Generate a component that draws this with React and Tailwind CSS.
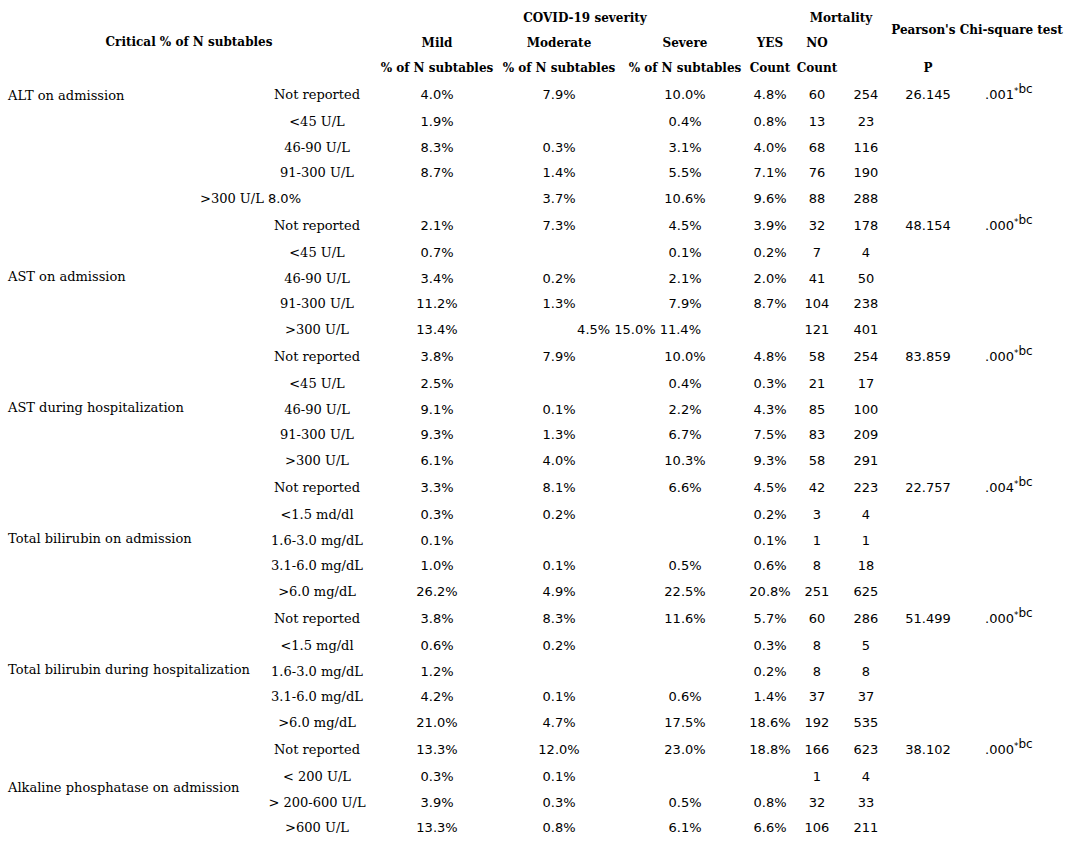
import React from "react";

const cols =
  "grid grid-cols-[256px_122px_118px_126px_126px_44px_50px_48px_76px_98px]";

const serif = { fontFamily: '"DejaVu Serif", serif' };

const groups = [
  {
    label: "ALT on admission",
    top: true,
    stat: "26.145",
    p: ".001",
    rows: [
      ["Not reported", "4.0%", "7.9%", "10.0%", "4.8%", "60", "254"],
      ["<45 U/L", "1.9%", "", "0.4%", "0.8%", "13", "23"],
      ["46-90 U/L", "8.3%", "0.3%", "3.1%", "4.0%", "68", "116"],
      ["91-300 U/L", "8.7%", "1.4%", "5.5%", "7.1%", "76", "190"],
      { odd: "alt", cells: ["3.7%", "10.6%", "9.6%", "88", "288"] },
    ],
  },
  {
    label: "AST on admission",
    stat: "48.154",
    p: ".000",
    rows: [
      ["Not reported", "2.1%", "7.3%", "4.5%", "3.9%", "32", "178"],
      ["<45 U/L", "0.7%", "", "0.1%", "0.2%", "7", "4"],
      ["46-90 U/L", "3.4%", "0.2%", "2.1%", "2.0%", "41", "50"],
      ["91-300 U/L", "11.2%", "1.3%", "7.9%", "8.7%", "104", "238"],
      { odd: "ast", cells: ["13.4%", "121", "401"] },
    ],
  },
  {
    label: "AST during hospitalization",
    stat: "83.859",
    p: ".000",
    rows: [
      ["Not reported", "3.8%", "7.9%", "10.0%", "4.8%", "58", "254"],
      ["<45 U/L", "2.5%", "", "0.4%", "0.3%", "21", "17"],
      ["46-90 U/L", "9.1%", "0.1%", "2.2%", "4.3%", "85", "100"],
      ["91-300 U/L", "9.3%", "1.3%", "6.7%", "7.5%", "83", "209"],
      [">300 U/L", "6.1%", "4.0%", "10.3%", "9.3%", "58", "291"],
    ],
  },
  {
    label: "Total bilirubin on admission",
    stat: "22.757",
    p: ".004",
    rows: [
      ["Not reported", "3.3%", "8.1%", "6.6%", "4.5%", "42", "223"],
      ["<1.5 md/dl", "0.3%", "0.2%", "", "0.2%", "3", "4"],
      ["1.6-3.0 mg/dL", "0.1%", "", "", "0.1%", "1", "1"],
      ["3.1-6.0 mg/dL", "1.0%", "0.1%", "0.5%", "0.6%", "8", "18"],
      [">6.0 mg/dL", "26.2%", "4.9%", "22.5%", "20.8%", "251", "625"],
    ],
  },
  {
    label: "Total bilirubin during hospitalization",
    stat: "51.499",
    p: ".000",
    rows: [
      ["Not reported", "3.8%", "8.3%", "11.6%", "5.7%", "60", "286"],
      ["<1.5 mg/dl", "0.6%", "0.2%", "", "0.3%", "8", "5"],
      ["1.6-3.0 mg/dL", "1.2%", "", "", "0.2%", "8", "8"],
      ["3.1-6.0 mg/dL", "4.2%", "0.1%", "0.6%", "1.4%", "37", "37"],
      [">6.0 mg/dL", "21.0%", "4.7%", "17.5%", "18.6%", "192", "535"],
    ],
  },
  {
    label: "Alkaline phosphatase on admission",
    stat: "38.102",
    p: ".000",
    rows: [
      ["Not reported", "13.3%", "12.0%", "23.0%", "18.8%", "166", "623"],
      ["< 200 U/L", "0.3%", "0.1%", "", "", "1", "4"],
      ["> 200-600 U/L", "3.9%", "0.3%", "0.5%", "0.8%", "32", "33"],
      [">600 U/L", "13.3%", "0.8%", "6.1%", "6.6%", "106", "211"],
    ],
  },
];

const Num = ({ children, className = "" }) => (
  <div
    className={`flex items-center justify-center font-['DejaVu_Sans',sans-serif] text-[13px] ${className}`}
  >
    {children}
  </div>
);

const Sub = ({ children }) => (
  <div className="flex items-center justify-center whitespace-pre text-[13px]" style={serif}>
    {children}
  </div>
);

const Sig = ({ p }) => (
  <div className="flex items-center pl-[19px] font-['DejaVu_Sans',sans-serif] text-[13px]">
    <span>{p}</span>
    <span className="relative top-[-3px] text-[9px]">*</span>
    <span className="relative top-[-6px] text-[12px]">bc</span>
  </div>
);

const Row = ({ row, first, group }) => {
  if (row.odd === "alt") {
    // misaligned row: label and mild value run together
    const [m, s, y, n, t] = row.cells;
    return (
      <>
        <div
          className="col-span-2 flex items-center pl-[200px] whitespace-pre text-[13px]"
          style={serif}
        >
          {">300 U/L "}
          <span className="font-['DejaVu_Sans',sans-serif]">8.0%</span>
        </div>
        <div />
        <Num>{m}</Num>
        <Num>{s}</Num>
        <Num>{y}</Num>
        <Num>{n}</Num>
        <Num>{t}</Num>
        <div />
        <div />
      </>
    );
  }
  if (row.odd === "ast") {
    const [mild, n, t] = row.cells;
    return (
      <>
        <Sub>{">300 U/L"}</Sub>
        <Num>{mild}</Num>
        <Num className="col-span-2 justify-end pr-[47px] whitespace-pre">
          4.5% 15.0% 11.4%
        </Num>
        <div />
        <Num>{n}</Num>
        <Num>{t}</Num>
        <div />
        <div />
      </>
    );
  }
  const [sub, mild, mod, sev, yes, no, tot] = row;
  return (
    <>
      <Sub>{sub}</Sub>
      <Num>{mild}</Num>
      <Num>{mod}</Num>
      <Num>{sev}</Num>
      <Num>{yes}</Num>
      <Num>{no}</Num>
      <Num>{tot}</Num>
      {first ? <Num>{group.stat}</Num> : <div />}
      {first ? <Sig p={group.p} /> : <div />}
    </>
  );
};

const Group = ({ group }) => {
  const five = group.rows.length === 5;
  const rowsClass = five
    ? "grid-rows-[29px_repeat(4,25.5px)]"
    : "grid-rows-[29px_repeat(3,25.5px)]";
  let labelClass = "items-center row-span-4";
  if (group.top) labelClass = "items-start pt-[6px] row-span-4";
  else if (five) labelClass = "items-center row-span-5";
  return (
    <div className={`${cols} ${rowsClass}`}>
      <div
        className={`${labelClass} flex pl-2 text-[13px] whitespace-nowrap`}
        style={serif}
      >
        {group.label}
      </div>
      {group.rows.map((row, i) => (
        <Row key={i} row={row} first={i === 0} group={group} />
      ))}
    </div>
  );
};

const Header = () => (
  <div
    className={`${cols} grid-rows-[25px_25px_25px] mt-[5px] font-bold text-[12px] whitespace-nowrap`}
    style={serif}
  >
    <div className="row-span-3 col-span-2 flex items-center justify-center pb-[1px]">
      Critical % of N subtables
    </div>
    <div className="col-span-4 flex items-center justify-center">COVID-19 severity</div>
    <div className="col-span-2 flex items-center justify-center">Mortality</div>
    <div className="col-span-2 row-span-2 flex items-center justify-center">
      Pearson's Chi-square test
    </div>

    <div className="flex items-center justify-center">Mild</div>
    <div className="flex items-center justify-center">Moderate</div>
    <div className="flex items-center justify-center">Severe</div>
    <div className="flex items-center justify-center">YES</div>
    <div className="flex items-center justify-center">NO</div>
    <div />

    <div className="flex items-center justify-center">% of N subtables</div>
    <div className="flex items-center justify-center">% of N subtables</div>
    <div className="flex items-center justify-center">% of N subtables</div>
    <div className="flex items-center justify-center">Count</div>
    <div className="flex items-center justify-center">Count</div>
    <div />
    <div className="flex items-center justify-center">P</div>
    <div />
  </div>
);

export default function App() {
  return (
    <div className="w-[1082px] min-h-[844px] bg-white text-black">
      <Header />
      <div>
        {groups.map((g, i) => (
          <Group key={i} group={g} />
        ))}
      </div>
    </div>
  );
}
